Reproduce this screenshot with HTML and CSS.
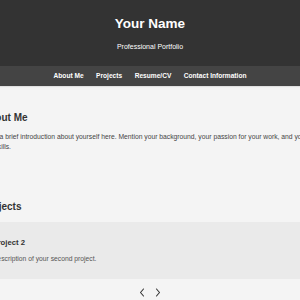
FILE: index.html
```html
<!DOCTYPE html>
<html lang="en">
<head>
<meta charset="utf-8">
<title>Your Name - Portfolio</title>
<link rel="stylesheet" href="styles.css">
</head>
<body>
<header class="site-header">
  <h1 class="site-title">Your Name</h1>
  <p class="site-subtitle">Professional Portfolio</p>
</header>
<nav class="site-nav">
  <a href="#about">About Me</a>
  <a href="#projects">Projects</a>
  <a href="#resume">Resume/CV</a>
  <a href="#contact">Contact Information</a>
</nav>
<main class="content">
  <section class="section about" id="about">
    <h2 class="section-title">About Me</h2>
    <p class="text">Write a brief introduction about yourself here. Mention your background, your passion for your work, and your key skills.</p>
  </section>
  <section class="section projects" id="projects">
    <h2 class="section-title">Projects</h2>
    <div class="project-card">
      <h3 class="project-title">Project 2</h3>
      <p class="text">Description of your second project.</p>
    </div>
    <div class="carousel-controls">
      <button class="arrow" aria-label="Previous">
        <svg width="6" height="9" viewBox="0 0 6 9"><path d="M4.5 1 L1.5 4.5 L4.5 8" fill="none" stroke="#333" stroke-width="1.1" stroke-linecap="round" stroke-linejoin="round"/></svg>
      </button>
      <button class="arrow" aria-label="Next">
        <svg width="6" height="9" viewBox="0 0 6 9"><path d="M1.5 1 L4.5 4.5 L1.5 8" fill="none" stroke="#333" stroke-width="1.1" stroke-linecap="round" stroke-linejoin="round"/></svg>
      </button>
    </div>
  </section>
</main>
</body>
</html>
```

FILE: styles.css
```css
html, body {
  margin: 0;
  padding: 0;
}
body {
  background: #f4f4f4;
  font-family: "Liberation Sans", Arial, sans-serif;
  color: #333;
  overflow: hidden;
  display: flex;
  flex-direction: column;
  align-items: center;
}
.site-header {
  align-self: stretch;
  background: #333;
  color: #fff;
  text-align: center;
  padding: 16px 0 15px;
}
.site-title {
  margin: 0;
  font-size: 13.5px;
  line-height: 16px;
  font-weight: bold;
}
.site-subtitle {
  margin: 11px 0 0;
  font-size: 7px;
  line-height: 8px;
}
.site-nav {
  align-self: stretch;
  background: #444;
  display: flex;
  justify-content: center;
  gap: 12.5px;
  height: 20px;
  align-items: center;
  box-shadow: 0 1px 1px rgba(0,0,0,0.08);
}
.site-nav a {
  color: #fff;
  text-decoration: none;
  font-weight: bold;
  font-size: 6.6px;
  line-height: 8px;
}
.content {
  width: 336px;
  flex-shrink: 0;
  padding-top: 25.5px;
}
.section-title {
  margin: 0;
  font-size: 10px;
  line-height: 12px;
  font-weight: bold;
  color: #333;
}
.text {
  margin: 0;
  font-size: 6.75px;
  line-height: 10px;
  color: #444;
}
.about .text {
  margin-top: 8.2px;
}
.projects {
  margin-top: 49.8px;
}
.project-card {
  margin-top: 8.2px;
  background: #eaeaea;
  padding: 16px 10.5px 15px;
}
.project-title {
  margin: 0;
  font-size: 7.7px;
  line-height: 9px;
  font-weight: bold;
  color: #333;
}
.project-card .text {
  margin-top: 7.4px;
  color: #555;
}
.carousel-controls {
  display: flex;
  justify-content: center;
  padding-top: 7px;
  padding-right: 1px;
}
.arrow {
  width: 16px;
  height: 12px;
  padding: 0;
  border: 0;
  background: none;
  display: flex;
  align-items: center;
  justify-content: center;
}
```
